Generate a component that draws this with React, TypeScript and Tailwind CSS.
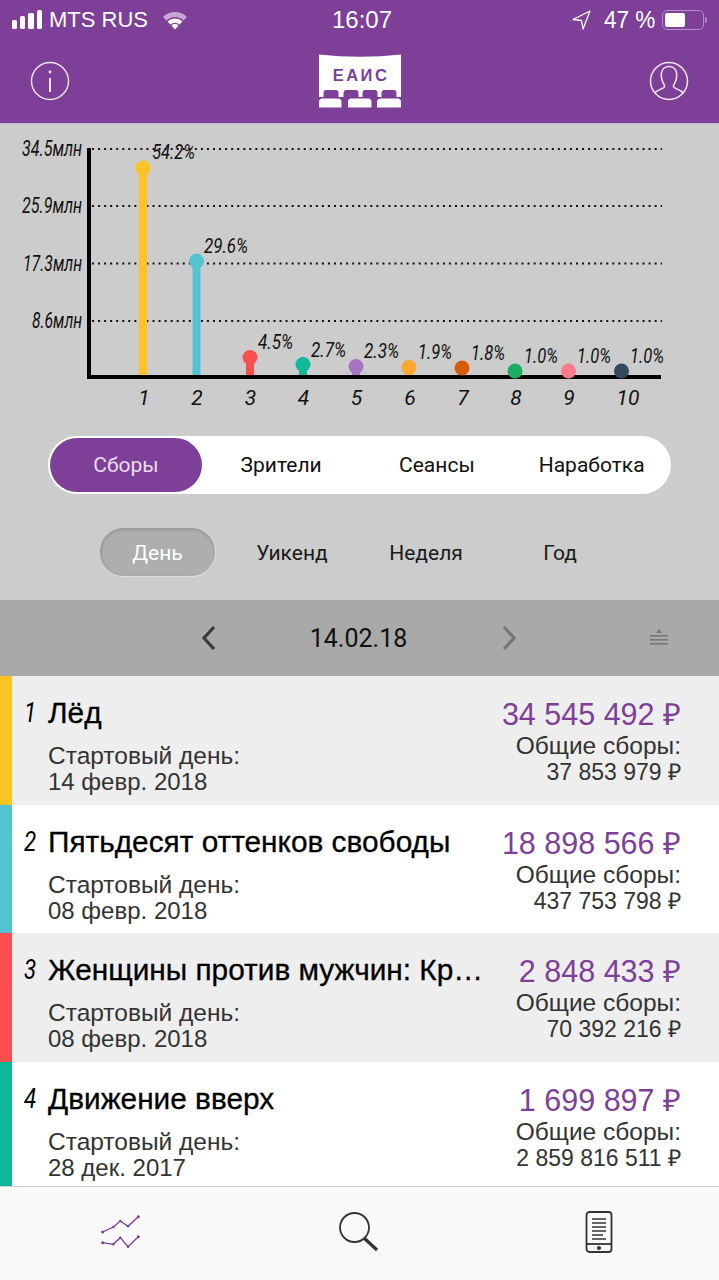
const bars = [
  { x: 143, cy: 168, color: '#fdc323', pct: '54.2%', lx: 152, ly: 159, lw: 43, n: '1', nx: 144 },
  { x: 196.5, cy: 261, color: '#52c3d0', pct: '29.6%', lx: 204, ly: 253, lw: 44, n: '2', nx: 197 },
  { x: 250, cy: 357.5, color: '#fb4f4f', pct: '4.5%', lx: 258, ly: 349, lw: 35, n: '3', nx: 250.5 },
  { x: 303, cy: 364.5, color: '#0fb998', pct: '2.7%', lx: 311, ly: 356.5, lw: 35, n: '4', nx: 303.5 },
  { x: 356, cy: 366.5, color: '#a974c4', pct: '2.3%', lx: 364, ly: 358, lw: 35, n: '5', nx: 356.5 },
  { x: 409, cy: 367.5, color: '#f9a72f', pct: '1.9%', lx: 418, ly: 359, lw: 34, n: '6', nx: 410 },
  { x: 462, cy: 368, color: '#d85c08', pct: '1.8%', lx: 471, ly: 359.5, lw: 34, n: '7', nx: 463 },
  { x: 515, cy: 371, color: '#19ae62', pct: '1.0%', lx: 524, ly: 362.5, lw: 34, n: '8', nx: 516 },
  { x: 568.5, cy: 371, color: '#fb7a8c', pct: '1.0%', lx: 577, ly: 362.5, lw: 34, n: '9', nx: 569 },
  { x: 621.5, cy: 371, color: '#34495e', pct: '1.0%', lx: 630, ly: 362.5, lw: 34, n: '10', nx: 628 },
];

const ticks = [
  { y: 149, label: '34.5млн', tx: 22, ty: 156, w: 60 },
  { y: 206, label: '25.9млн', tx: 22, ty: 213, w: 60 },
  { y: 263.5, label: '17.3млн', tx: 23, ty: 271, w: 59 },
  { y: 321, label: '8.6млн', tx: 32, ty: 328, w: 50 },
];

const films = [
  { n: '1', title: 'Лёд', start: '14 февр. 2018', gross: '34 545 492 ₽', total: '37 853 979 ₽', color: 'bg-[#fdc323]', bg: 'bg-[#eeeeee]' },
  { n: '2', title: 'Пятьдесят оттенков свободы', start: '08 февр. 2018', gross: '18 898 566 ₽', total: '437 753 798 ₽', color: 'bg-[#52c3d0]', bg: 'bg-white' },
  { n: '3', title: 'Женщины против мужчин: Кр…', start: '08 февр. 2018', gross: '2 848 433 ₽', total: '70 392 216 ₽', color: 'bg-[#fb4f4f]', bg: 'bg-[#eeeeee]' },
  { n: '4', title: 'Движение вверх', start: '28 дек. 2017', gross: '1 699 897 ₽', total: '2 859 816 511 ₽', color: 'bg-[#0fb998]', bg: 'bg-white' },
];

function StatusBar() {
  return (
    <div className="flex h-[40px] items-center justify-between pl-[12px] pr-[15px] text-white font-['Liberation_Sans',sans-serif]">
      <div className="flex w-[190px] items-center">
        <svg width="30" height="20" viewBox="0 0 30 20" fill="white">
          <rect x="0" y="10" width="5" height="9" rx="1.5" />
          <rect x="8" y="6" width="5" height="13" rx="1.5" />
          <rect x="16" y="3" width="6" height="16" rx="1.5" />
          <rect x="25" y="0" width="5" height="19" rx="1.5" />
        </svg>
        <span className="ml-[7px] text-[22px] leading-none whitespace-nowrap">MTS RUS</span>
        <svg className="ml-[14px]" width="26" height="20" viewBox="0 0 26 20">
          <path d="M1 7 A17 17 0 0 1 25 7 L21.5 10.5 A12 12 0 0 0 4.5 10.5 Z" fill="#c9a5d6" />
          <path d="M5.5 11.5 A11 11 0 0 1 20.5 11.5 L17.5 14.5 A7 7 0 0 0 8.5 14.5 Z" fill="white" />
          <path d="M9.5 15.5 A5 5 0 0 1 16.5 15.5 L13 19.5 Z" fill="white" />
        </svg>
      </div>
      <span className="-ml-[4px] text-[24px] font-normal leading-none">16:07</span>
      <div className="flex w-[178px] items-center justify-end">
        <svg width="19" height="20" viewBox="0 0 19 20" fill="none" stroke="white" strokeWidth="1.3" strokeLinejoin="round">
          <path d="M18 1 L1 9.5 L9.5 10.5 L11 19 Z" />
        </svg>
        <span className="ml-[13px] inline-block w-[53px] text-[23px] leading-none whitespace-nowrap">
          <span className="inline-block origin-left scale-x-[0.98]">47 %</span>
        </span>
        <div className="relative ml-[5px] h-[20px] w-[42px] rounded-[5px] border border-[#b48fc4] p-[2px]">
          <div className="h-full w-[20px] rounded-[2px] bg-white" />
          <div className="absolute -right-[4px] top-[6px] h-[6px] w-[2px] rounded-r-sm bg-[#b48fc4]" />
        </div>
      </div>
    </div>
  );
}

function Logo() {
  return (
    <svg width="82" height="54" viewBox="0 0 82 54">
      <path d="M0 0.5 Q41 5 82 0.5 L82 43 H0 Z" fill="white" />
      <text x="42" y="26.5" textAnchor="middle" fill="#7d3f98" fontSize="16.5" fontWeight="700" letterSpacing="2.5" fontFamily="'Liberation Sans', sans-serif">ЕАИС</text>
      <g fill="#7d3f98">
        <path d="M4.5 43 V39 Q4.5 36 7.5 36 H16.5 Q19.5 36 19.5 39 V43 Z" />
        <path d="M24.5 43 V39 Q24.5 36 27.5 36 H36.5 Q39.5 36 39.5 39 V43 Z" />
        <path d="M43.5 43 V39 Q43.5 36 46.5 36 H55.5 Q58.5 36 58.5 39 V43 Z" />
        <path d="M62.5 43 V39 Q62.5 36 65.5 36 H74.5 Q77.5 36 77.5 39 V43 Z" />
      </g>
      <g fill="white">
        <path d="M0 48 Q0 44.5 3.5 44.5 H19 Q22.5 44.5 22.5 48 V53.5 H0 Z" />
        <path d="M29 48 Q29 44.5 32.5 44.5 H49 Q52.5 44.5 52.5 48 V53.5 H29 Z" />
        <path d="M58 48 Q58 44.5 61.5 44.5 H78.5 Q82 44.5 82 48 V53.5 H58 Z" />
      </g>
    </svg>
  );
}

function Header() {
  return (
    <div className="bg-[#7d3f98]">
      <StatusBar />
      <div className="flex h-[83px] items-start justify-between px-[30px] pt-[14px]">
        <svg className="mt-[7px]" width="40" height="40" viewBox="0 0 40 40" fill="none" stroke="#f1e8f5" strokeWidth="1.4">
          <circle cx="20" cy="20" r="18.5" />
          <path d="M20 17 V31" strokeWidth="2" />
          <circle cx="20" cy="11" r="1.4" fill="#f1e8f5" stroke="none" />
        </svg>
        <Logo />
        <svg className="mt-[7px]" width="40" height="40" viewBox="0 0 40 40" fill="none" stroke="#f1e8f5" strokeWidth="1.5">
          <circle cx="20" cy="20" r="18.5" />
          <path d="M5.5 32 C8 29 13 28 15 26.5 C16 25.5 15.5 24 14.5 22.5 C12.5 19 12 15 12.5 11.5 C13.5 7.5 16.5 5.5 20 5.5 C23.5 5.5 26.5 7.5 27.5 11.5 C28 15 27.5 19 25.5 22.5 C24.5 24 24 25.5 25 26.5 C27 28 32 29 34.5 32" />
        </svg>
      </div>
      <div className="h-px bg-[#c9b3d6]" />
    </div>
  );
}

function Chart() {
  // svg sits directly under the header, so page y minus 124
  return (
    <svg className="block font-['Roboto',sans-serif] italic" width="719" height="296" viewBox="0 124 719 296">
      {ticks.map((t) => (
        <g key={t.y}>
          <line x1="92" x2="662" y1={t.y} y2={t.y} stroke="#111" strokeWidth="2" strokeDasharray="2 4.05" />
          <text x={t.tx} y={t.ty} fontSize="22" fill="#111" textLength={t.w} lengthAdjust="spacingAndGlyphs">{t.label}</text>
        </g>
      ))}
      {bars.map((b) => (
        <g key={b.n}>
          <rect x={b.x - 4} y={b.cy} width="8" height={376 - b.cy} fill={b.color} />
          <text x={b.lx} y={b.ly} fontSize="21" fill="#111" textLength={b.lw} lengthAdjust="spacingAndGlyphs">{b.pct}</text>
          <text x={b.nx} y="405" fontSize="21" fill="#111" textAnchor="middle">{b.n}</text>
        </g>
      ))}
      <path d="M89 148 V377 H661" fill="none" stroke="black" strokeWidth="4" />
      {bars.map((b) => (
        <circle key={b.n} cx={b.x} cy={b.cy} r="7.5" fill={b.color} />
      ))}
    </svg>
  );
}

function Filters() {
  return (
    <div className="flex h-[180px] flex-col font-['Roboto',sans-serif]">
      <div className="mx-[48px] mt-[16px] grid h-[58px] grid-cols-4 items-center rounded-full bg-white p-[2px] text-center text-[21px] text-[#111]">
        <div className="flex h-[54px] w-[152px] items-center justify-center rounded-full bg-[#7d3f98] pt-[1px] text-[#e8ddee]">Сборы</div>
        <div className="-ml-[2px] pt-[1px]">Зрители</div>
        <div className="pt-[1px]">Сеансы</div>
        <div className="pt-[1px]">Наработка</div>
      </div>
      <div className="ml-[91px] mt-[34px] grid h-[48px] w-[536px] grid-cols-4 items-center text-center text-[21px] text-[#1a1a1a]">
        <div className="ml-[9px] flex h-[48px] w-[115px] items-center justify-center rounded-full bg-[#aeaeae] pt-[3px] text-white shadow-[inset_0_2px_3px_#989898,inset_2px_0_2px_#a2a2a2,0_1px_1px_#e0e0e0,1px_0_1px_#dcdcdc]">День</div>
        <div className="pt-[3px]">Уикенд</div>
        <div className="pt-[3px]">Неделя</div>
        <div className="pt-[3px]">Год</div>
      </div>
    </div>
  );
}

function DateBar() {
  return (
    <div className="relative flex h-[76px] items-center justify-center bg-[#a9a9a9] font-['Roboto',sans-serif]">
      <svg className="-ml-[2px]" width="18" height="26" viewBox="0 0 18 26" fill="none" stroke="#3a3a3a" strokeWidth="3.2">
        <path d="M15 2 L5 13 L15 24" />
      </svg>
      <span className="w-[284px] pt-[1px] text-center text-[25px] text-[#111]">14.02.18</span>
      <svg width="18" height="26" viewBox="0 0 18 26" fill="none" stroke="#767676" strokeWidth="3.2">
        <path d="M3 2 L13 13 L3 24" />
      </svg>
      <svg className="absolute left-[650px] top-[29px]" width="18" height="17" viewBox="0 0 18 17" fill="#777">
        <path d="M9 0 L12 4 H6 Z" />
        <rect y="6" width="18" height="1.6" />
        <rect y="10" width="18" height="1.6" />
        <rect y="14" width="18" height="1.6" />
      </svg>
    </div>
  );
}

function FilmRow({ film }: { film: (typeof films)[number] }) {
  return (
    <div className={`flex h-[128.67px] shrink-0 font-['Liberation_Sans',sans-serif] ${film.bg}`}>
      <div className={`w-[12px] shrink-0 ${film.color}`} />
      <div className="w-[36px] shrink-0 pl-[12px] pt-[21px] font-['Roboto',sans-serif] text-[28px] italic leading-[32px] text-black">
        <span className="inline-block origin-left scale-x-[0.8]">{film.n}</span>
      </div>
      <div className="w-[440px] shrink-0 pt-[19px]">
        <div className="whitespace-nowrap text-[29.8px] leading-[36px] text-black [-webkit-text-stroke:0.3px_black]">{film.title}</div>
        <div className="mt-[11px] text-[24.5px] leading-[27px] text-[#333]">
          <div>Стартовый день:</div>
          <div className="-mt-px text-[24px]">{film.start}</div>
        </div>
      </div>
      <div className="flex flex-1 flex-col items-end pr-[38px] pt-[20px] text-right">
        <div className="whitespace-nowrap text-[30.5px] leading-[36px] text-[#7d3f98]">{film.gross}</div>
        <div className="whitespace-nowrap text-[24.5px] leading-[27px] text-[#333]">Общие сборы:</div>
        <div className="whitespace-nowrap text-[23px] leading-[27px] text-[#333]">{film.total}</div>
      </div>
    </div>
  );
}

function TabBar() {
  return (
    <div className="relative flex h-[94px] shrink-0 items-start border-t border-[#cfcfcf] bg-[#f9f9f9]">
      <div className="flex w-[239px] justify-center pt-[27px]">
        <svg width="42" height="34" viewBox="0 0 42 34" fill="none" stroke="#7d3f98" strokeWidth="1.3">
          <path d="M3.7 18 L14.3 13 L21.3 7 L29 12.3 L39.3 2.7" />
          <path d="M3.7 28.7 L14.3 30.3 L21.3 23.7 L29 32.7 L39.3 22.7" />
          <g fill="#7d3f98" stroke="none">
            <circle cx="3.7" cy="18" r="1.5" />
            <circle cx="14.3" cy="13" r="1.2" />
            <circle cx="21.3" cy="7" r="1.2" />
            <circle cx="29" cy="12.3" r="1.2" />
            <circle cx="39.3" cy="2.7" r="1.5" />
            <circle cx="3.7" cy="28.7" r="1.5" />
            <circle cx="14.3" cy="30.3" r="1.2" />
            <circle cx="21.3" cy="23.7" r="1.2" />
            <circle cx="29" cy="32.7" r="1.2" />
            <circle cx="39.3" cy="22.7" r="1.5" />
          </g>
        </svg>
      </div>
      <div className="flex w-[240px] justify-center pt-[25px]">
        <svg width="40" height="40" viewBox="0 0 40 40" fill="none" stroke="#333" strokeWidth="1.8">
          <circle cx="15.5" cy="15.5" r="14.5" />
          <path d="M25 26 L38 38" strokeWidth="3.2" />
        </svg>
      </div>
      <div className="flex w-[240px] justify-center pt-[24px]">
        <svg width="28" height="42" viewBox="0 0 28 42" fill="none" stroke="#333" strokeWidth="1.8">
          <rect x="1.5" y="1" width="25" height="40" rx="3" />
          <path d="M1.5 33 H26.5" />
          <path d="M7 8 H21 M7 12 H21 M7 16 H21 M7 20 H21 M7 24 H18 M7 28 H21" strokeWidth="1.5" />
          <circle cx="14" cy="37" r="1.2" fill="#333" />
        </svg>
      </div>
    </div>
  );
}

export default function App() {
  return (
    <main className="flex h-[1280px] w-[719px] flex-col overflow-hidden bg-white">
      <Header />
      <div className="bg-[#cccccc]">
        <Chart />
        <Filters />
      </div>
      <DateBar />
      <div className="min-h-0 flex-1 overflow-hidden">
        {films.map((f) => (
          <FilmRow key={f.n} film={f} />
        ))}
      </div>
      <TabBar />
    </main>
  );
}
